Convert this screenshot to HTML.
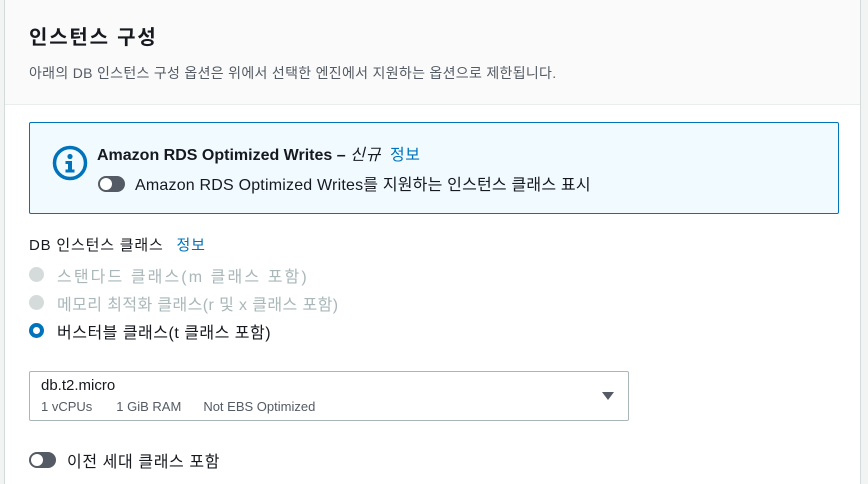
<!DOCTYPE html>
<html><head><meta charset="utf-8"><style>
*{margin:0;padding:0;box-sizing:border-box}
body{width:868px;height:484px;background:#f2f3f3;font-family:"Liberation Sans","Noto Sans CJK KR",sans-serif;color:#16191f;position:relative;overflow:hidden}
.card{position:absolute;left:4px;top:0;width:857px;height:484px;background:#fff;border-left:1px solid #d5dbdb;border-right:1px solid #d5dbdb}
.hdr{position:absolute;left:0;top:0;right:0;height:105px;background:#fafafa;border-bottom:1px solid #eaeded}
.abs{position:absolute;white-space:nowrap}
.info{position:absolute;left:24px;top:122px;width:810px;height:92px;background:#f1faff;border:1px solid #0073bb;border-radius:2px}
.tog{position:absolute;width:27px;height:16px;border-radius:8px;background:#545b64}
.tog::after{content:"";position:absolute;left:2px;top:2px;width:12px;height:12px;border-radius:50%;background:#fff}
.rad{position:absolute;width:15px;height:15px;border-radius:50%}
.link{color:#0073bb}
.sel{position:absolute;left:24px;top:371px;width:600px;height:50px;border:1px solid #aab7b8;border-radius:2px}
</style></head><body>
<div class="card">
<div class="hdr">
<div class="abs" style="left:24px;top:21px;font-size:20px;font-weight:bold;letter-spacing:1.8px">인스턴스 구성</div>
<div class="abs" style="left:24px;top:63px;font-size:14px;color:#545b64;letter-spacing:0.3px">아래의 DB 인스턴스 구성 옵션은 위에서 선택한 엔진에서 지원하는 옵션으로 제한됩니다.</div>
</div>
<div class="info">
<svg class="abs" style="left:22px;top:22px" width="36" height="36" viewBox="0 0 36 36"><circle cx="18" cy="18" r="15.5" fill="none" stroke="#0073bb" stroke-width="3.5"/><circle cx="18" cy="11.5" r="2.6" fill="#0073bb"/><path d="M13.5 16h6.5v8.5h2.5v3h-9v-3h2.5v-5.5h-2.5z" fill="#0073bb"/></svg>
<div class="abs" style="left:67px;top:18px;font-size:16px;font-weight:bold">Amazon RDS Optimized Writes – <i style="font-weight:normal;letter-spacing:1px">신규</i> <span class="link" style="font-weight:normal;margin-left:4px;letter-spacing:0.5px">정보</span></div>
<div class="tog" style="left:68px;top:53px"></div>
<div class="abs" style="left:105px;top:48px;font-size:16px;letter-spacing:0.2px">Amazon RDS Optimized Writes를 지원하는 인스턴스 클래스 표시</div>
</div>
<div class="abs" style="left:24px;top:234px;font-size:15px;letter-spacing:0.8px">DB 인스턴스 클래스 <span class="link" style="margin-left:8px">정보</span></div>
<div class="rad" style="left:24px;top:267px;background:#d5dbdb"></div>
<div class="abs" style="left:52px;top:263px;font-size:16px;color:#aab7b8;letter-spacing:2.1px">스탠다드 클래스(m 클래스 포함)</div>
<div class="rad" style="left:24px;top:295px;background:#d5dbdb"></div>
<div class="abs" style="left:52px;top:291px;font-size:16px;color:#aab7b8;letter-spacing:0.4px">메모리 최적화 클래스(r 및 x 클래스 포함)</div>
<div class="rad" style="left:24px;top:323px;border:4.5px solid #0073bb;background:#fff"></div>
<div class="abs" style="left:52px;top:319px;font-size:16px;letter-spacing:0.5px">버스터블 클래스(t 클래스 포함)</div>
<div class="sel">
<div class="abs" style="left:11px;top:5px;font-size:15px">db.t2.micro</div>
<div class="abs" style="left:11px;top:27px;font-size:13px;color:#545b64">1 vCPUs<span style="margin-left:24px">1 GiB RAM</span><span style="margin-left:22px">Not EBS Optimized</span></div>
<svg class="abs" style="left:571px;top:19px" width="14" height="10"><path d="M1 1h12L7 9z" fill="#545b64"/></svg>
</div>
<div class="tog" style="left:24px;top:452px"></div>
<div class="abs" style="left:62px;top:448px;font-size:16px;letter-spacing:0.6px">이전 세대 클래스 포함</div>
</div>
</body></html>
